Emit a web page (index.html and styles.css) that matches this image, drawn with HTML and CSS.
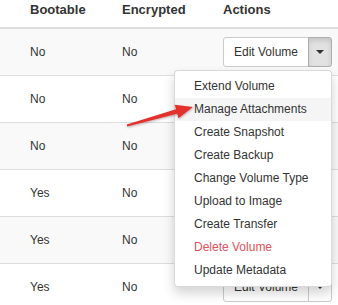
FILE: index.html
```html
<!DOCTYPE html>
<html>
<head>
<meta charset="utf-8">
<link rel="stylesheet" href="styles.css">
</head>
<body>
<div class="page">
  <table class="volumes">
    <colgroup>
      <col class="c0"><col class="c1"><col class="c2"><col class="c3">
    </colgroup>
    <thead>
      <tr><th></th><th>Bootable</th><th>Encrypted</th><th>Actions</th></tr>
    </thead>
    <tbody>
      <tr class="odd">
        <td></td><td>No</td><td>No</td>
        <td>
          <div class="btn-group open">
            <button class="btn">Edit Volume</button><button class="btn caret-btn active"><span class="caret"></span></button>
            <ul class="menu">
              <li>Extend Volume</li>
              <li class="hover">Manage Attachments</li>
              <li>Create Snapshot</li>
              <li>Create Backup</li>
              <li>Change Volume Type</li>
              <li>Upload to Image</li>
              <li>Create Transfer</li>
              <li class="danger">Delete Volume</li>
              <li>Update Metadata</li>
            </ul>
          </div>
        </td>
      </tr>
      <tr>
        <td></td><td>No</td><td>No</td>
        <td><div class="btn-group"><button class="btn">Edit Volume</button><button class="btn caret-btn"><span class="caret"></span></button></div></td>
      </tr>
      <tr class="odd">
        <td></td><td>No</td><td>No</td>
        <td><div class="btn-group"><button class="btn">Edit Volume</button><button class="btn caret-btn"><span class="caret"></span></button></div></td>
      </tr>
      <tr>
        <td></td><td>Yes</td><td>No</td>
        <td><div class="btn-group"><button class="btn">Edit Volume</button><button class="btn caret-btn"><span class="caret"></span></button></div></td>
      </tr>
      <tr class="odd">
        <td></td><td>Yes</td><td>No</td>
        <td><div class="btn-group"><button class="btn">Edit Volume</button><button class="btn caret-btn"><span class="caret"></span></button></div></td>
      </tr>
      <tr>
        <td></td><td>Yes</td><td>No</td>
        <td><div class="btn-group"><button class="btn">Edit Volume</button><button class="btn caret-btn"><span class="caret"></span></button></div></td>
      </tr>
    </tbody>
  </table>
  <svg class="arrow" width="338" height="305" viewBox="0 0 338 305">
    <defs>
      <filter id="sh" x="-20%" y="-50%" width="140%" height="200%">
        <feDropShadow dx="0.5" dy="1" stdDeviation="0.8" flood-color="#000" flood-opacity="0.3"/>
      </filter>
    </defs>
    <polygon filter="url(#sh)" fill="#e3302e" points="126.8,124.6 176,109.3 174.7,104.75 193,107 178.5,118.25 177.2,113.7 127.2,126.4"/>
  </svg>
</div>
</body>
</html>
```

FILE: styles.css
```css
html, body {
  margin: 0;
  padding: 0;
  background: #fff;
}
body {
  width: 338px;
  height: 305px;
  overflow: hidden;
  font-family: "Liberation Sans", Arial, sans-serif;
  font-size: 12px;
  color: #333;
}
.page {
  position: relative;
  width: 338px;
  height: 305px;
}
.volumes {
  width: 338px;
  table-layout: fixed;
  border-collapse: separate;
  border-spacing: 0;
}
.c0 { width: 22px; }
.c1 { width: 92px; }
.c2 { width: 101px; }
.c3 { width: 123px; }
.volumes th {
  text-align: left;
  font-size: 13px;
  font-weight: bold;
  line-height: 19px;
  padding: 0 8px 8px;
  border-bottom: 2px solid #ddd;
  vertical-align: bottom;
  white-space: nowrap;
}
.volumes td {
  padding: 8px;
  line-height: 17px;
  border-bottom: 1px solid #ddd;
  vertical-align: middle;
  white-space: nowrap;
}
.volumes tr.odd td {
  background: #f9f9f9;
}
.btn-group {
  position: relative;
  display: flex;
  width: 109px;
}
.btn-group.open {
  z-index: 10;
}
.btn {
  font-family: "Liberation Sans", Arial, sans-serif;
  font-size: 12px;
  color: #333;
  background: #fff;
  border: 1px solid #ccc;
  border-radius: 3px 0 0 3px;
  height: 30px;
  padding: 0 10px;
  line-height: 28px;
  margin: 0;
  white-space: nowrap;
}
.caret-btn {
  width: 25px;
  margin-left: -1px;
  padding: 0;
  border-radius: 0 3px 3px 0;
  display: flex;
  align-items: center;
  justify-content: center;
}
.caret-btn.active {
  background: #e2e2e2;
  border-color: #adadad;
  box-shadow: inset 0 3px 5px rgba(0,0,0,0.125);
}
.caret {
  width: 0;
  height: 0;
  border-top: 4px solid #333;
  border-left: 4px solid transparent;
  border-right: 4px solid transparent;
}
.menu {
  position: absolute;
  top: calc(100% + 3px);
  right: 0;
  width: 156px;
  margin: 0;
  padding: 4px 0;
  list-style: none;
  background: #fff;
  border: 1px solid rgba(0,0,0,0.15);
  border-radius: 4px;
  box-shadow: 0 6px 12px rgba(0,0,0,0.175);
}
.menu li {
  padding: 3px 19px;
  line-height: 17px;
  color: #333;
  white-space: nowrap;
}
.menu li.hover {
  background: #f5f5f5;
}
.menu li.danger {
  color: #e0505a;
}
.arrow {
  position: absolute;
  left: 0;
  top: 0;
  z-index: 20;
  pointer-events: none;
}
```
